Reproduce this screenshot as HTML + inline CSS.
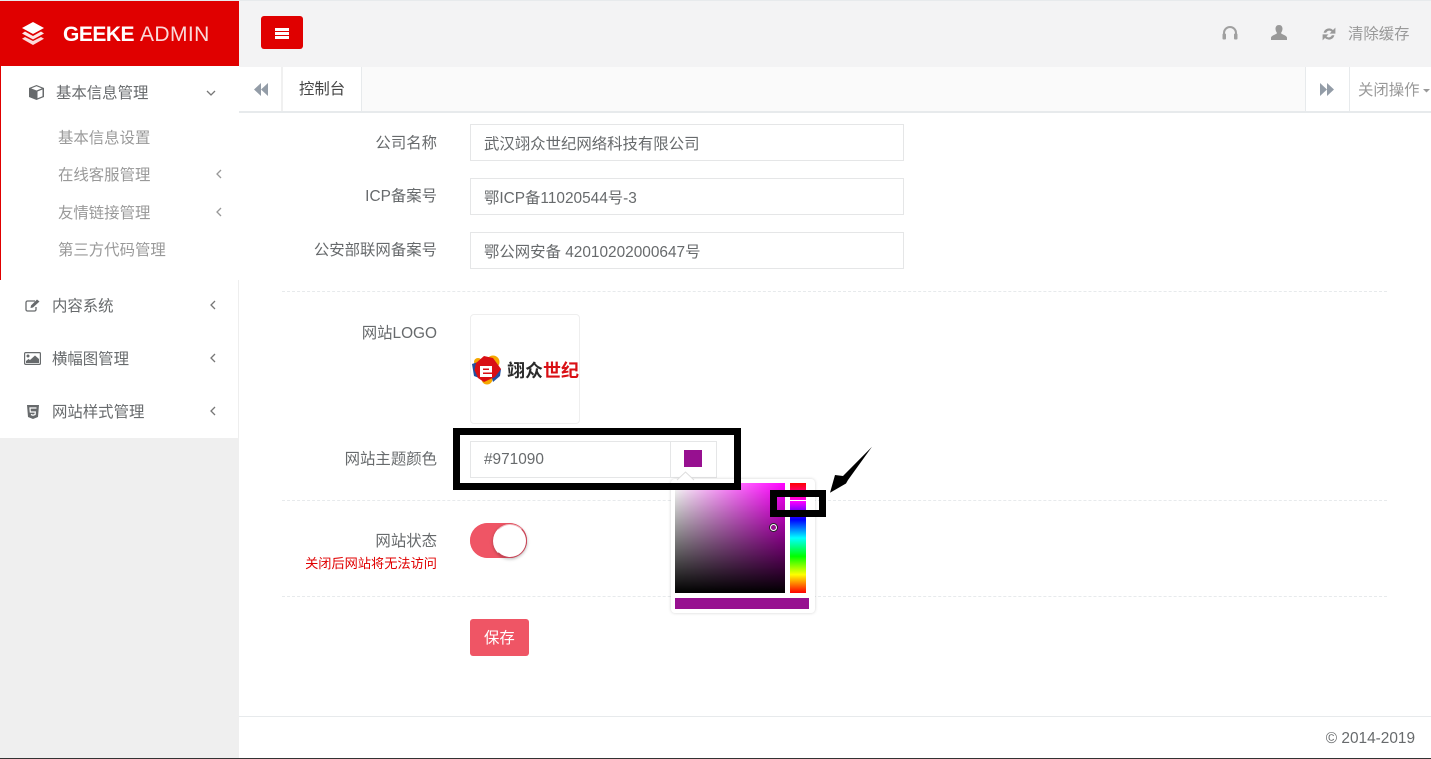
<!DOCTYPE html>
<html lang="zh"><head><meta charset="utf-8"><title>GEEKE ADMIN</title>
<style>
html,body{margin:0;padding:0;width:1431px;height:759px;overflow:hidden;background:#fff}
body{position:relative;font-family:"Liberation Sans","Noto Sans CJK SC",sans-serif;font-size:15.400px;color:#676a6c}
.a{position:absolute;box-sizing:border-box}
.t{position:absolute;white-space:nowrap;line-height:20px}
.lb{position:absolute;left:282px;width:155px;text-align:right;white-space:nowrap;line-height:20px;color:#676a6c}
.in{position:absolute;left:470px;width:434px;height:37px;box-sizing:border-box;border:1px solid #e5e6e7;padding-left:13px;line-height:39px;color:#676a6c;white-space:nowrap}
.dash{position:absolute;left:282px;width:1105px;height:0;border-top:1px dashed #e7eaec}
.m1{color:#676a6c}.m2{color:#999}
svg{position:absolute;overflow:visible}
</style></head><body>
<div class="a" style="left:0;top:0;width:1431px;height:1px;background:#e7eaec"></div>
<div class="a" style="left:239px;top:1px;width:1192px;height:66px;background:#f3f3f4"></div>
<div class="a" style="left:0;top:1px;width:239px;height:65px;background:#e00000"></div>
<svg style="left:22px;top:22px" width="22" height="24" viewBox="0 0 22 24"><path d="M11 0 22 6 11 12 0 6Z" fill="#fff"/><path d="M3 9.500 11 14 19 9.500 22 11.500 11 17.500 0 11.500Z" fill="#fff" opacity=".9"/><path d="M3 15 11 19 19 15 22 16.800 11 23 0 16.800Z" fill="#fff" opacity=".85"/></svg>
<div class="t" style="left:63px;top:23px;font-size:21px;line-height:24px;color:#fff;letter-spacing:-.5px;font-weight:700">GEEKE</div>
<div class="t" style="left:140px;top:23px;font-size:21px;line-height:24px;color:#fff;letter-spacing:.4px;opacity:.85">ADMIN</div>
<div class="a" style="left:261px;top:16px;width:42px;height:33px;background:#e00000;border-radius:3px"></div>
<div class="a" style="left:275px;top:28px;width:14px;height:2.500px;background:#fff"></div>
<div class="a" style="left:275px;top:32px;width:14px;height:2.500px;background:#fff"></div>
<div class="a" style="left:275px;top:36px;width:14px;height:2.500px;background:#fff"></div>
<svg style="left:1222px;top:25px" width="16" height="15" viewBox="0 0 16 15"><path d="M2 14V8a6 6 0 0 1 12 0v6" fill="none" stroke="#a0a0a0" stroke-width="2"/><rect x="0.500" y="8.500" width="3.500" height="6" rx="1" fill="#a0a0a0"/><rect x="12" y="8.500" width="3.500" height="6" rx="1" fill="#a0a0a0"/></svg>
<svg style="left:1271px;top:25px" width="16" height="15" viewBox="0 0 16 15"><path d="M8 0c2.400 0 3.500 1.800 3.500 3.800 0 1.700-.8 3.200-1.500 4.200 0 1.300 5.500 2.200 6 4.500V15H0v-2.500C.5 10.200 6 9.300 6 8 5.300 7 4.500 5.500 4.500 3.800 4.500 1.800 5.600 0 8 0Z" fill="#999"/></svg>
<svg style="left:1322px;top:27px" width="14" height="14" viewBox="0 0 14 14"><path d="M1.600 5.800A5.600 5.600 0 0 1 11 3L13.400 .6v6H7.500l2-2a3.200 3.200 0 0 0-5.300 1.200ZM12.400 8.200A5.600 5.600 0 0 1 3 11L.6 13.400v-6H6.500l-2 2a3.200 3.200 0 0 0 5.300-1.200Z" fill="#999"/></svg>
<div class="t m2" style="left:1348px;top:25px">清除缓存</div>

<div class="a" style="left:239px;top:67px;width:1192px;height:46px;background:#fafafa;border-bottom:2px solid #e7eaec"></div>
<div class="a" style="left:239px;top:67px;width:44px;height:44px;background:#fff;border-right:2px solid #f0f0f0"></div>
<svg style="left:254px;top:83px" width="15" height="13" viewBox="0 0 15 13"><path d="M7 0V13L0 6.500ZM14 0V13L7 6.500Z" fill="#939ca7"/></svg>
<div class="a" style="left:283px;top:67px;width:79px;height:44px;background:#fff;border-right:1px solid #e7eaec"></div>
<div class="t" style="left:299px;top:80px;color:#444">控制台</div>
<div class="a" style="left:1305px;top:67px;width:45px;height:44px;background:#fff;border-left:1px solid #e7eaec;border-right:1px solid #e7eaec"></div>
<svg style="left:1320px;top:83px" width="15" height="13" viewBox="0 0 15 13"><path d="M0 0V13L7 6.500ZM7 0V13L14 6.500Z" fill="#939ca7"/></svg>
<div class="a" style="left:1350px;top:67px;width:81px;height:44px;background:#fff"></div>
<div class="t m2" style="left:1358px;top:81px">关闭操作</div>
<svg style="left:1423px;top:89px" width="7" height="4"><path d="M0 0H7L3.500 3.500Z" fill="#999"/></svg>

<!-- sidebar -->
<div class="a" style="left:0;top:66px;width:239px;height:372px;background:#fff;border-right:1px solid #eee"></div>
<div class="a" style="left:0;top:438px;width:239px;height:321px;background:#efefef"></div>
<div class="a" style="left:0;top:66px;width:239px;height:214px;background:#fff;border-left:1px solid #e00000"></div>
<svg style="left:29px;top:85px" width="15" height="15" viewBox="0 0 15 15"><path d="M7.500 0 15 3v9l-7.500 3L0 12V3Z" fill="#676a6c"/><path d="M8.500 6.500 13.500 4.500v6.700l-5 2Z" fill="#fff"/><path d="M7.500 1.300 12.800 3.400 7.500 5.500 2.200 3.400Z" fill="#fff"/></svg>
<div class="t m1" style="left:56px;top:84px">基本信息管理</div>
<svg style="left:206px;top:90px" width="10" height="6"><path d="M1 1 5 5 9 1" fill="none" stroke="#777" stroke-width="1.300"/></svg>
<div class="t m2" style="left:58px;top:129px">基本信息设置</div>
<div class="t m2" style="left:58px;top:166px">在线客服管理</div>
<div class="t m2" style="left:58px;top:204px">友情链接管理</div>
<div class="t m2" style="left:58px;top:241px">第三方代码管理</div>
<svg style="left:216px;top:169px" width="6" height="10"><path d="M5 1 1 5 5 9" fill="none" stroke="#999" stroke-width="1.300"/></svg>
<svg style="left:216px;top:207px" width="6" height="10"><path d="M5 1 1 5 5 9" fill="none" stroke="#999" stroke-width="1.300"/></svg>
<svg style="left:25px;top:299px" width="15" height="13" viewBox="0 0 15 13"><path d="M10 2H2.500A1.500 1.500 0 0 0 1 3.500v7A1.500 1.500 0 0 0 2.500 12h7a1.500 1.500 0 0 0 1.500-1.500V8" fill="none" stroke="#676a6c" stroke-width="1.300"/><path d="M5.500 9 6 6.500 12 .5 14.500 2.500 8 8.500Z" fill="#676a6c"/></svg>
<div class="t m1" style="left:52px;top:297px">内容系统</div>
<svg style="left:210px;top:300px" width="6" height="10"><path d="M5 1 1 5 5 9" fill="none" stroke="#777" stroke-width="1.300"/></svg>
<svg style="left:24px;top:352px" width="17" height="13" viewBox="0 0 17 13"><rect x=".6" y=".6" width="15.800" height="11.800" rx="1" fill="none" stroke="#676a6c" stroke-width="1.200"/><circle cx="4" cy="4" r="1.500" fill="#676a6c"/><path d="M2 11V9L4.500 7 6 8 11 3.500 15 7V11Z" fill="#676a6c"/></svg>
<div class="t m1" style="left:52px;top:350px">横幅图管理</div>
<svg style="left:210px;top:353px" width="6" height="10"><path d="M5 1 1 5 5 9" fill="none" stroke="#777" stroke-width="1.300"/></svg>
<svg style="left:27px;top:405px" width="12" height="14" viewBox="0 0 12 14"><path d="M0 0H12L11 12 6 14 1 12Z" fill="#676a6c"/><path d="M9.500 3H3l.3 4h5l-.2 2.500L6 10.200 3.900 9.500" fill="none" stroke="#fff" stroke-width="1.200"/></svg>
<div class="t m1" style="left:52px;top:403px">网站样式管理</div>
<svg style="left:210px;top:406px" width="6" height="10"><path d="M5 1 1 5 5 9" fill="none" stroke="#777" stroke-width="1.300"/></svg>

<!-- form -->
<div class="lb" style="top:134px">公司名称</div>
<div class="in" style="top:124px">武汉翊众世纪网络科技有限公司</div>
<div class="lb" style="top:187px">ICP备案号</div>
<div class="in" style="top:178px">鄂ICP备11020544号-3</div>
<div class="lb" style="top:241px">公安部联网备案号</div>
<div class="in" style="top:232px">鄂公网安备 42010202000647号</div>
<div class="dash" style="top:291px"></div>
<div class="lb" style="top:324px">网站LOGO</div>
<div class="a" style="left:470px;top:314px;width:110px;height:110px;border:1px solid #eee;border-radius:4px;background:#fff"></div>
<svg style="left:471px;top:354px" width="108" height="32" viewBox="0 0 108 32">
<circle cx="22" cy="8" r="6.500" fill="#f5a800"/><circle cx="16" cy="25" r="5.500" fill="#f5a800"/><circle cx="7" cy="8" r="4" fill="#f5a800"/>
<path d="M1 10 7 8 8 24 3 22Z" fill="#1f4fa0"/><path d="M22 28 29 22 30 15 20 20Z" fill="#1f4fa0"/>
<path d="M5 9 13 2 22 4 30 15 24 23 13 28 7 24 3.500 16Z" fill="#d90f14"/>
<path fill-rule="evenodd" d="M9 12H21V18.500H12V20H21V23H9ZM12 14.500V16H18V14.500Z" fill="#fff"/>
<text x="36" y="23" font-family="'Noto Sans CJK SC',sans-serif" font-size="18" font-weight="700" fill="#2a2a2a">翊众<tspan fill="#d90f14">世纪</tspan></text></svg>

<div class="lb" style="top:450px">网站主题颜色</div>
<div class="a" style="left:470px;top:441px;width:247px;height:37px;border:1px solid #e5e6e7"></div>
<div class="a" style="left:670px;top:441px;width:1px;height:37px;background:#e5e6e7"></div>
<div class="t" style="left:484px;top:450px">#971090</div>
<div class="a" style="left:684px;top:450px;width:18px;height:17px;background:#971090"></div>
<div class="dash" style="top:500px"></div>
<div class="lb" style="top:532px">网站状态</div>
<div class="lb" style="top:555px;font-size:13.200px;color:#e00000;line-height:18px">关闭后网站将无法访问</div>
<div class="a" style="left:470px;top:523px;width:57px;height:35px;border-radius:18px;background:#ef5565;box-shadow:inset 0 0 0 1px #ef5565"></div>
<div class="a" style="left:493px;top:523.500px;width:34px;height:34px;border-radius:50%;background:#fff;border:1px solid #c9485a;border-left-color:#fff;border-top-color:#f0c0c5;box-shadow:0 1px 3px rgba(0,0,0,.3)"></div>
<div class="dash" style="top:596px"></div>
<div class="a" style="left:470px;top:619px;width:59px;height:37px;background:#ef5565;border-radius:3px"></div>
<div class="t" style="left:484px;top:629px;color:#fff">保存</div>

<!-- colour picker -->
<div class="a" style="left:671px;top:479px;width:144px;height:134px;background:#fff;border-radius:4px;box-shadow:0 0 3px rgba(0,0,0,.18)"></div>
<svg style="left:677px;top:472px" width="17" height="8"><path d="M0 8 8.500 0 17 8" fill="#fff" stroke="#ddd"/></svg>
<div class="a" style="left:675px;top:483px;width:110px;height:110px;background:linear-gradient(to bottom,rgba(0,0,0,0),#000),linear-gradient(to right,#fff,#f0f)"></div>
<div class="a" style="left:790px;top:483px;width:16px;height:110px;background:linear-gradient(to bottom,#f00 0%,#f0f 16.700%,#00f 33.300%,#0ff 50%,#0f0 66.700%,#ff0 83.300%,#f00 100%)"></div>
<div class="a" style="left:790px;top:500px;width:16px;height:1px;background:#fff"></div>
<div class="a" style="left:769.500px;top:524px;width:7px;height:7px;border-radius:50%;border:1.500px solid #fff;box-shadow:0 0 0 1px #222;background:#971090"></div>
<div class="a" style="left:675px;top:598px;width:134px;height:11px;background:#971090"></div>

<!-- annotations -->
<div class="a" style="left:453px;top:428px;width:288px;height:62px;border:7px solid #000"></div>
<div class="a" style="left:770px;top:490px;width:56px;height:27px;border:7px solid #000"></div>
<svg style="left:0;top:0" width="1431" height="759"><path d="M872 446.700 843 476 835 475 830 492.700 846 483.500 848 480Z" fill="#000"/></svg>

<!-- footer -->
<div class="a" style="left:239px;top:716px;width:1192px;height:1px;background:#e7eaec"></div>
<div class="t" style="right:16px;top:729px">© 2014-2019</div>
<div class="a" style="left:0;top:758px;width:1431px;height:1px;background:#333"></div>
</body></html>
